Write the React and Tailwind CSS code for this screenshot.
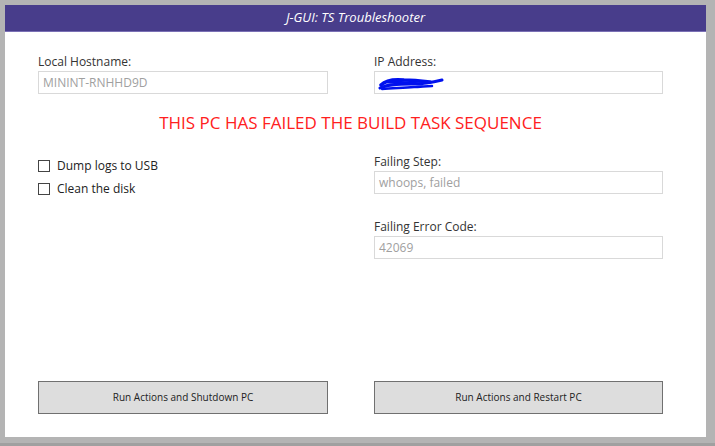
import React from 'react'

const font = { fontFamily: '"Open Sans", "Noto Sans", sans-serif' }

const Field = ({ label, value, children }) => (
  <div className="flex flex-col">
    <label className="text-[12px] leading-[16px] text-[#333333] mb-[1px]">{label}</label>
    <div className="relative h-[23px] border border-[#d9d9d9] bg-white flex items-center px-[4px] text-[12px] text-[#a0a0a0]">
      {value}
      {children}
    </div>
  </div>
)

const Check = ({ label }) => (
  <label className="flex items-center h-[23px] text-[12px] text-[#222222]">
    <span className="w-[12px] h-[12px] border border-[#444444] bg-white mr-[7px]" />
    {label}
  </label>
)

const Scribble = () => (
  <svg className="absolute left-[3px] top-[5px]" width="70" height="14" viewBox="0 0 70 14">
    <g fill="none" stroke="#0011ee" strokeLinecap="round" strokeLinejoin="round">
      <path d="M3 8 C8 3, 16 2, 26 3 C36 3, 44 4, 52 5" strokeWidth="3.5" />
      <path d="M2 11 C10 7, 22 7, 34 7 C44 7, 52 6, 64 3" strokeWidth="3" />
      <path d="M4 12 C14 11, 24 11, 36 10 C42 10, 48 9, 54 9" strokeWidth="2.5" />
      <path d="M10 5 C20 5, 30 6, 44 7" strokeWidth="3" />
    </g>
  </svg>
)

const Button = ({ children }) => (
  <button className="h-[33px] w-full bg-[#dddddd] border border-[#707070] text-[10px] text-[#222222]">
    {children}
  </button>
)

export default function App() {
  return (
    <div
      style={font}
      className="w-[715px] h-[446px] bg-[#b4b4b4] pt-[5px] pl-[5px] pr-[9px] pb-[6px] border-b-[3px] border-[#a0a0a0]"
    >
      <div className="w-full h-full bg-white flex flex-col">
        {/* Title bar */}
        <div className="h-[27px] bg-[#483d8b] border-b border-[#7a70b5] flex items-center justify-center">
          <span className="text-white italic text-[13px]">J-GUI: TS Troubleshooter</span>
        </div>

        <div className="flex-1 flex flex-col px-[33px] pt-[22px] pb-[23px]">
          <div className="grid grid-cols-[290px_289px] gap-x-[46px]">
            <Field label="Local Hostname:" value="MININT-RNHHD9D" />
            <Field label="IP Address:">
              <Scribble />
            </Field>
          </div>

          <h1 className="text-center text-[17px] leading-[24px] text-[#ff2020] mt-[17px] pr-[10px]">
            THIS PC HAS FAILED THE BUILD TASK SEQUENCE
          </h1>

          <div className="grid grid-cols-[290px_289px] gap-x-[46px] mt-[19px]">
            <div className="flex flex-col">
              <Check label="Dump logs to USB" />
              <Check label="Clean the disk" />
            </div>
            <div className="flex flex-col gap-[25px]">
              <Field label="Failing Step:" value="whoops, failed" />
              <Field label="Failing Error Code:" value="42069" />
            </div>
          </div>

          <div className="flex-1" />

          <div className="grid grid-cols-[290px_289px] gap-x-[46px]">
            <Button>Run Actions and Shutdown PC</Button>
            <Button>Run Actions and Restart PC</Button>
          </div>
        </div>
      </div>
    </div>
  )
}
